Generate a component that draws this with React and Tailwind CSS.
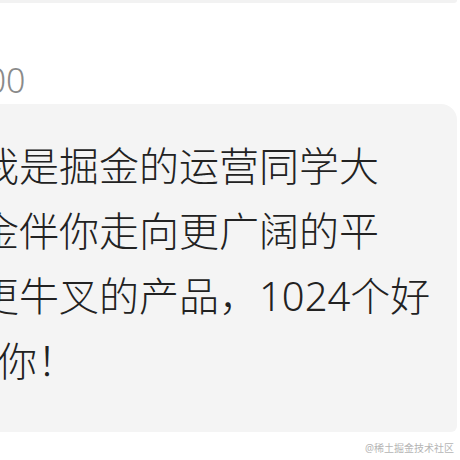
export default function App(){
  const lines = [
    { text: '我是掘金的运营同学大', cls: 'ml-[-1px]' },
    { text: '掘金伴你走向更广阔的平', cls: 'ml-[-41px]' },
    { text: '和更牛叉的产品，1024个好', cls: 'ml-[-41px]' },
    { text: '你！', cls: 'ml-[17px]' },
  ]
  return (
    <div className="w-[460px] h-[460px] overflow-hidden bg-white" style={{ fontFamily: '"Noto Sans", "Noto Sans CJK SC", sans-serif' }}>
      <div className="h-[3px] mr-[3px] bg-[#f2f2f2] rounded-br-[3px]" />
      <div className="h-[101px] pt-[53px]">
        <div className="ml-[-41px] text-[34px] leading-[48px] font-light text-[#8a8a8a] whitespace-nowrap">1:00</div>
      </div>
      <div className="ml-[-20px] mr-[3px] bg-[#f4f4f4] rounded-tr-[16px] rounded-br-[6px] pt-[29px] pb-[39px]">
        {lines.map((l, i) => (
          <div key={i} className={`${l.cls} text-[40px] leading-[65px] font-light text-[#222] whitespace-nowrap`}>
            {l.text}
          </div>
        ))}
      </div>
      <div className="flex justify-end pr-[6px] pt-[9px] text-[10px] leading-[14px] text-[#b5b5b5]">@稀土掘金技术社区</div>
    </div>
  )
}
